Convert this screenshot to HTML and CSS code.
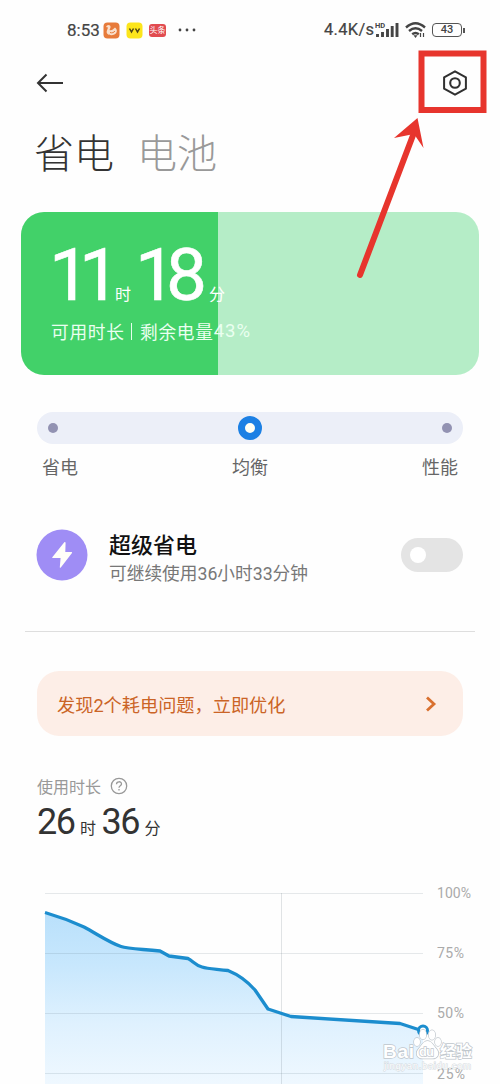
FILE: index.html
```html
<!DOCTYPE html>
<html lang="zh-CN">
<head>
<meta charset="utf-8">
<title>省电与电池</title>
<link rel="stylesheet" href="styles.css">
</head>
<body>
<main class="screen">
  <header class="status">
    <div class="status-left">
      <span class="clock">8:53</span>
      <svg class="app" width="17" height="17" viewBox="0 0 17 17"><rect x=".5" y=".5" width="16" height="16" rx="4" fill="#e77b3b"/><path d="M4 3.500c2-1.500 4 .2 3.500 2L6.500 8c2 .8 3.500-.5 5.500-2.500 1.500 1 2.500 3 1.500 5-1.500 3-6.500 3.500-9 1.500-1.600-1.500-.6-3.500 0-5l.5-1.500L3 5z" fill="#f9dfcc"/><path d="M7 10.500c2 .8 4 0 5-1.500" stroke="#e77b3b" fill="none"/></svg>
      <svg class="app" width="17" height="17" viewBox="0 0 17 17"><rect x=".5" y=".5" width="16" height="16" rx="4" fill="#fce51b"/><path d="M3.500 6.500l2 3.500 2-3.500M9.500 6.500l2 3.500 2-3.500" stroke="#4d4315" stroke-width="1.500" fill="none"/></svg>
      <span class="app news">头条</span>
      <svg class="dots" width="18" height="4" viewBox="0 0 18 4"><g fill="#444"><circle cx="2" cy="2" r="1.400"/><circle cx="9" cy="2" r="1.400"/><circle cx="16" cy="2" r="1.400"/></g></svg>
    </div>
    <div class="status-right">
      <span class="speed">4.4K/s</span>
      <svg class="signal" width="24" height="18" viewBox="0 0 24 18"><text x="0" y="7" class="hd">HD</text><path d="M2.500 13v3M7.500 11v5M12.500 8v8M17.200 5v11M22 2v14" stroke="#444" stroke-width="2.900"/></svg>
      <svg class="wifi" width="22" height="18" viewBox="0 0 22 18"><g fill="none" stroke="#444" stroke-width="2.400"><path d="M1 6.500q9.500-8.500 19 0M4 10q6.500-5.500 13 0M7.200 13.200q3.300-2.600 6.600 0"/></g><path d="M8.500 14.300h4L10.500 17z" fill="#444"/><path d="M15.500 12v4M18.500 12v4" stroke="#444" stroke-width="1.200"/></svg>
      <span class="battery">43</span><span class="cap"></span>
    </div>
  </header>

  <nav class="toolbar">
    <svg width="28" height="20" viewBox="0 0 28 20" fill="none" stroke="#333" stroke-width="2"><path d="M27 10H2M10.500 1.500L2 10l8.500 8.500"/></svg>
    <svg width="26" height="28" viewBox="0 0 26 28" fill="none" stroke="#303030" stroke-width="2"><path stroke-linejoin="round" d="M13 2.300L23.900 8.300v11.400L13 25.700 2.100 19.700V8.300z"/><circle cx="13" cy="14" r="4.800" stroke-width="2.100"/></svg>
  </nav>

  <div class="tabs"><span>省电</span><span class="tab-off">电池</span></div>

  <section class="card">
    <div class="time"><span class="num n11">11</span><span class="unit">时</span><span class="num n18">18</span><span class="unit">分</span></div>
    <div class="remain"><span>可用时长</span><i class="bar"></i><span>剩余电量</span><span class="percent">43%</span></div>
  </section>

  <div class="slider"><i class="stop"></i><i class="knob"></i><i class="stop"></i></div>
  <div class="modes"><span>省电</span><span>均衡</span><span>性能</span></div>

  <section class="super">
    <svg width="52" height="52" viewBox="0 0 52 52"><circle cx="26" cy="26" r="25.500" fill="#9f8df5"/><path d="M28.300 13.200L16.300 28.200q-.4.900.7.900h7.600l-.8 9.100q.2 1 1 .2L36 24q.5-1.100-.6-1.100h-6.100l.3-9.100q-.3-1.300-1.300-.6z" fill="#fffef9"/></svg>
    <div class="super-text"><h2>超级省电</h2><p>可继续使用36小时33分钟</p></div>
    <div class="switch"><i></i></div>
  </section>
  <hr class="rule">

  <section class="notice"><span>发现2个耗电问题，立即优化</span><svg width="12" height="18" viewBox="0 0 12 18"><path d="M2 2.500L9 9l-7 6.500" fill="none" stroke="#d9702f" stroke-width="2.800"/></svg></section>

  <div class="usage-label"><span>使用时长</span><svg width="18" height="18" viewBox="0 0 18 18"><circle cx="9" cy="9" r="7.700" fill="none" stroke="#999" stroke-width="1.300"/><path d="M6.500 7.200c0-3.200 5-3.200 5-.2 0 1.800-2.500 1.800-2.500 3.700M9 12v1.500" fill="none" stroke="#999" stroke-width="1.300"/></svg></div>
  <div class="usage"><span class="u-num">26</span><span class="u-unit">时</span><span class="u-num">36</span><span class="u-unit">分</span></div>

  <section class="chart">
    <svg width="500" height="204" viewBox="0 880 500 204">
      <defs><linearGradient id="fill" x1="0" y1="912" x2="0" y2="1084" gradientUnits="userSpaceOnUse"><stop offset="0" stop-color="#b9e0fb"/><stop offset=".3" stop-color="#c7e7fd"/><stop offset=".65" stop-color="#dff1fe"/><stop offset="1" stop-color="#eff8ff"/></linearGradient></defs>
      <path d="M45 912.500C57 916 71 921 84 927C97 934 110 943 121 946.500C127 948.500 133 948.500 160 951L169 956L188 958.500C193 961 195 965 202 967C208 969 217 969 228 970.500C239 975 248 982 255 990L268 1009L291 1016.500L400 1023.500L423 1031V1084H45z" fill="url(#fill)"/>
      <path d="M45 893.500H423M45 953.500H423M45 1013.500H423M45 1073.500H423" stroke="#5a6b76" stroke-opacity=".15"/>
      <path d="M281.500 893V1084" stroke="#5a6b76" stroke-opacity=".18"/>
      <path d="M45 912.500C57 916 71 921 84 927C97 934 110 943 121 946.500C127 948.500 133 948.500 160 951L169 956L188 958.500C193 961 195 965 202 967C208 969 217 969 228 970.500C239 975 248 982 255 990L268 1009L291 1016.500L400 1023.500L423 1031" fill="none" stroke="#1c8dce" stroke-width="3.300" stroke-linejoin="round"/>
      <circle cx="423" cy="1030.500" r="4.500" fill="#fff" stroke="#1c8dce" stroke-width="3"/>
      <g class="axis"><text x="437" y="898" textLength="34">100%</text><text x="437" y="958" textLength="27">75%</text><text x="437" y="1018" textLength="27">50%</text><text x="437" y="1079" textLength="28">25%</text></g>
      <g class="mark">
        <text x="383" y="1057.500" class="brand" textLength="31">Bai</text>
        <path d="M427.500 1041c4 0 6 4.500 9 8 4 5 1 10-5 9.500h-8c-6 .5-9-4.500-5-9.500 3-3.500 5-8 9-8z"/><ellipse cx="417" cy="1042" rx="3" ry="4"/><ellipse cx="423" cy="1034.500" rx="3.200" ry="4.800"/><ellipse cx="432" cy="1035" rx="3.200" ry="4.800"/><ellipse cx="438" cy="1042" rx="3" ry="4"/>
        <text x="419" y="1056" class="du" textLength="15">du</text>
        <text x="440" y="1057" class="cn" textLength="32">经验</text>
        <text x="384" y="1069" class="site" textLength="87">jingyan.baidu.com</text>
      </g>
    </svg>
  </section>

  <svg class="annotation" width="130" height="232" viewBox="360 48 130 232"><path d="M421.500 53.500H483.500V110H421.500z" fill="none" stroke="#e7352d" stroke-width="6"/><path d="M360 275L415 130" stroke="#e7352d" stroke-width="6" stroke-linecap="round"/><path d="M417.500 118L423.500 148L414 134L394 138z" fill="#e7352d"/></svg>
</main>
</body>
</html>
```
FILE: styles.css
```css
* { box-sizing: border-box; }
body { margin: 0; background: #fefefe; font-family: Roboto, "Noto Sans CJK SC", sans-serif; }
.screen { position: relative; width: 500px; height: 1084px; overflow: hidden; display: flex; flex-direction: column; }
.screen svg { display: block; flex: none; }
.screen span { white-space: nowrap; flex: none; }

.status { height: 60px; padding: 0 35px 0 67px; display: flex; justify-content: space-between; align-items: center; color: #444; }
.status-left, .status-right { display: flex; align-items: center; }
.clock { font: 400 17px/20px Roboto, sans-serif; width: 36px; -webkit-text-stroke: .2px #444; }
.app { margin-right: 6px; }
.news { width: 17px; height: 13px; border-radius: 3px; background: #e14b50; color: #fff; font-size: 8px; line-height: 13px; text-align: center; }
.dots { margin-left: 6px; }
.speed { font: 400 16.500px/20px Roboto, sans-serif; letter-spacing: .3px; width: 51px; -webkit-text-stroke: .2px #444; }
.hd { font: 700 7.500px Roboto, sans-serif; fill: #444; }
.wifi { margin: 0 5px 0 6px; }
.battery { width: 30px; height: 14px; border: 1.500px solid #555; border-radius: 4px; font: 500 11px/12px Roboto, sans-serif; text-align: center; }
.cap { width: 2px; height: 5px; margin-left: 1px; background: #555; }

.toolbar { height: 46px; padding: 0 32px 0 36px; display: flex; justify-content: space-between; align-items: center; }
.tabs { height: 106px; padding: 22px 0 0 34px; display: flex; gap: 23px; color: #333; font: 300 40px/46px "Noto Sans CJK SC", sans-serif; }
.tab-off { color: #999; }

.card { width: 458px; height: 163px; margin-left: 21px; border-radius: 23px; padding-left: 30px; color: #fff; background: linear-gradient(90deg, #42d169 0 197px, #b5edc7 197px); }
.time { height: 102px; display: flex; align-items: baseline; }
.num { font: 400 73px/127px Roboto, sans-serif; letter-spacing: -10px; -webkit-text-stroke: .6px #fff; }
.n11 { width: 66px; margin-left: -2px; letter-spacing: -11px; }
.n18 { width: 74px; margin-left: 4px; letter-spacing: -10px; }
.unit { width: 16px; font-size: 16px; line-height: 20px; }
.remain { display: flex; align-items: center; height: 34px; font-size: 17.700px; letter-spacing: .7px; color: #eafff0; }
.percent { font-size: 18.500px; letter-spacing: 1px; }
.bar { width: 1.500px; height: 17px; background: #e5ffec; margin: 0 8px 0 6px; }

.slider { width: 426px; height: 32px; margin: 37px 0 0 37px; padding: 0 11px; border-radius: 16px; background: #eceff8; display: flex; align-items: center; justify-content: space-between; }
.stop { width: 10px; height: 10px; border-radius: 50%; background: #9292b2; }
.knob { width: 24px; height: 24px; border-radius: 50%; border: 7px solid #1c80e4; background: #fffff5; }
.modes { height: 46px; padding: 0 42px; display: flex; justify-content: space-between; font-size: 18px; line-height: 47px; color: #666; }

.super { height: 108px; margin-top: 11px; padding: 0 37px 0 36px; display: flex; align-items: center; }
.super-text { flex: 1; padding: 9px 0 0 21px; }
h2 { margin: 0; font-size: 22px; line-height: 29px; font-weight: 500; color: #111; }
p { margin: 0; font-size: 17.700px; line-height: 29px; color: #777; }
.switch { width: 62px; height: 34px; padding: 9px; border-radius: 17px; background: #e4e4e4; }
.switch i { display: block; width: 16px; height: 16px; border-radius: 50%; background: #fff; }
.rule { width: 450px; height: 1px; margin: 22px 0 0 25px; border: 0; background: #dedede; flex: none; }

.notice { width: 426px; height: 65px; margin: 39px 0 0 37px; padding: 0 26px 0 20px; border-radius: 22px; background: #fdeee7; color: #cb6426; display: flex; align-items: center; justify-content: space-between; font-size: 18.200px; }
.usage-label { height: 26px; margin: 37px 0 0 37px; display: flex; align-items: center; gap: 9px; font-size: 16px; color: #999; }
.usage { height: 81px; padding-left: 37px; display: flex; align-items: baseline; color: #333; }
.u-num { font: 400 36px/46px Roboto, sans-serif; letter-spacing: -1.500px; width: 43px; }
.u-unit { width: 21.500px; font-size: 16px; line-height: 20px; }

.chart { height: 204px; }
.axis text { font: 400 14px Roboto, sans-serif; fill: #aaa; }
.mark { fill: #fff; stroke: #bfc6cc; stroke-width: 1.400; paint-order: stroke; }
.brand { font: 700 19px "Liberation Sans", sans-serif; }
.du { font: 700 13px "Liberation Sans", sans-serif; }
.cn { font: 700 16px "Noto Sans CJK SC", sans-serif; }
.site { font: 400 9.500px "Liberation Sans", sans-serif; fill: #fff; stroke: #d3d9dd; stroke-width: 1; }
.annotation { position: absolute; left: 360px; top: 48px; overflow: visible; }
```
